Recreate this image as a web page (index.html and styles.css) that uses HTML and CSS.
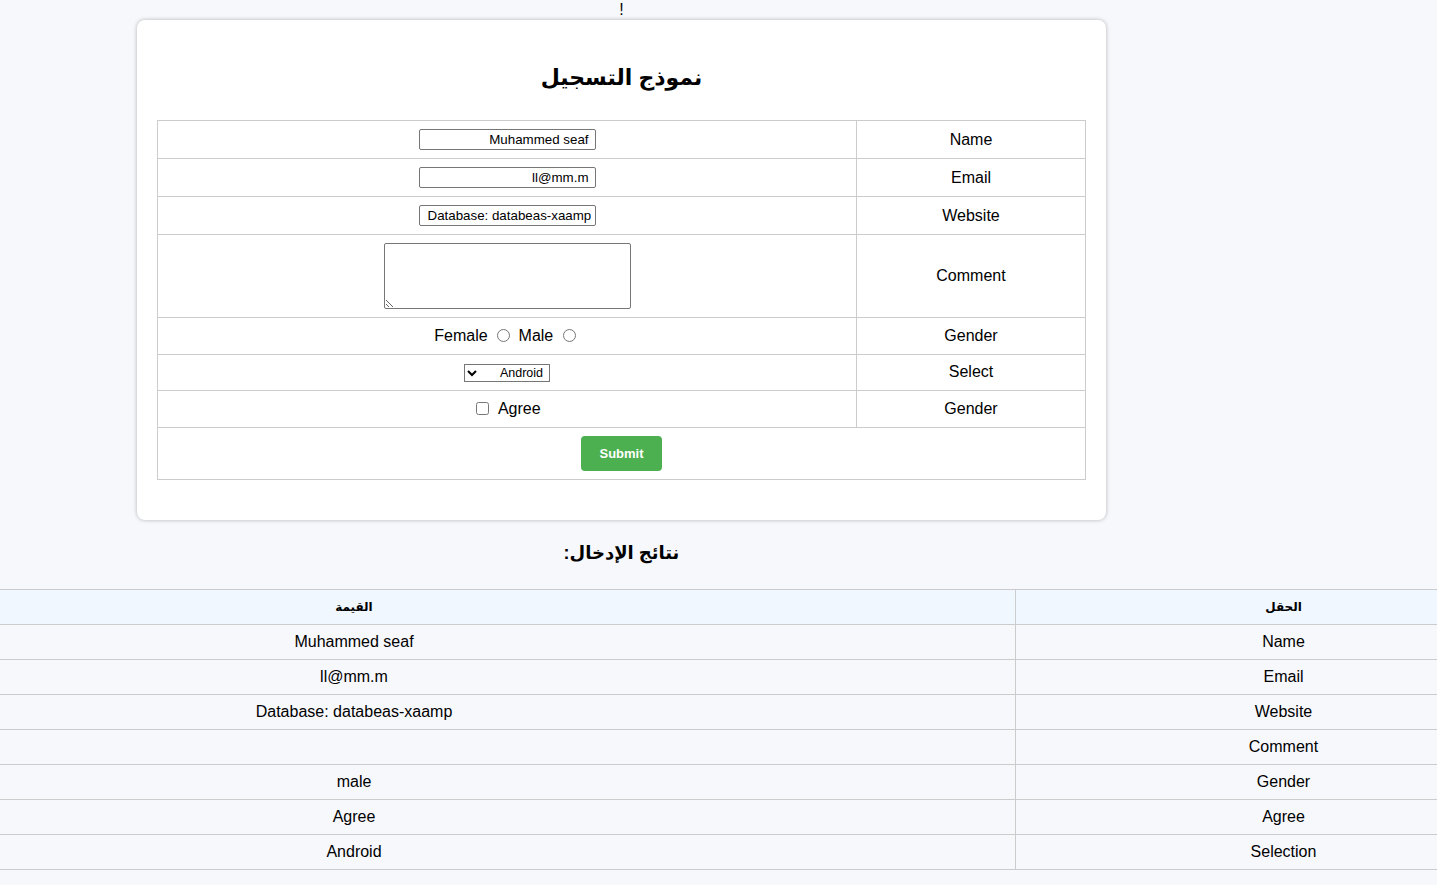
FILE: index.html
```html
<!DOCTYPE html>
<html lang="ar" dir="rtl">
<head>
<meta charset="utf-8">
<title>نموذج التسجيل</title>
<link rel="stylesheet" href="styles.css">
</head>
<body>
<div class="page">
  <div class="bang">!</div>
  <div class="card">
    <h2 class="title">نموذج التسجيل</h2>
    <form>
      <table class="form-table">
        <tr>
          <td class="label">Name</td>
          <td class="field"><input class="text-in" type="text" value="Muhammed seaf"></td>
        </tr>
        <tr>
          <td class="label">Email</td>
          <td class="field"><input class="text-in" type="text" value="ll@mm.m"></td>
        </tr>
        <tr>
          <td class="label">Website</td>
          <td class="field"><input class="text-in ltr-over" type="text" value="Database: databeas-xaamp"></td>
        </tr>
        <tr>
          <td class="label">Comment</td>
          <td class="field"><textarea class="comment"></textarea></td>
        </tr>
        <tr>
          <td class="label">Gender</td>
          <td class="field radio-row"><input class="radio" type="radio" name="g"> Female <input class="radio" type="radio" name="g"> Male</td>
        </tr>
        <tr>
          <td class="label">Select</td>
          <td class="field"><select class="sel"><option>Android</option><option>iOS</option></select></td>
        </tr>
        <tr>
          <td class="label">Gender</td>
          <td class="field check-row">Agree <input class="check" type="checkbox"></td>
        </tr>
        <tr>
          <td class="submit-cell" colspan="2"><button class="submit" type="button">Submit</button></td>
        </tr>
      </table>
    </form>
  </div>
  <h2 class="results-title">نتائج الإدخال:</h2>
</div>
<div class="results-wrap">
<table class="results">
  <tr class="head">
    <th class="col-field">الحقل</th>
    <th class="col-value">القيمة</th>
  </tr>
  <tr><td class="col-field">Name</td><td class="col-value">Muhammed seaf</td></tr>
  <tr><td class="col-field">Email</td><td class="col-value">ll@mm.m</td></tr>
  <tr><td class="col-field">Website</td><td class="col-value">Database: databeas-xaamp</td></tr>
  <tr><td class="col-field">Comment</td><td class="col-value"></td></tr>
  <tr><td class="col-field">Gender</td><td class="col-value">male</td></tr>
  <tr><td class="col-field">Agree</td><td class="col-value">Agree</td></tr>
  <tr><td class="col-field">Selection</td><td class="col-value">Android</td></tr>
</table>
</div>
</body>
</html>
```
FILE: styles.css
```css
html, body {
  margin: 0;
  padding: 0;
}
body {
  background: #f7f8fc;
  font-family: Arial, "Liberation Sans", "DejaVu Sans", sans-serif;
  color: #000;
  font-size: 16px;
  overflow-x: hidden;
}
.page {
  width: 1243px;
  margin-left: 0;
  margin-right: auto;
  text-align: center;
}
.bang {
  height: 20px;
  line-height: 20px;
  font-size: 16px;
}
.card {
  width: 969px;
  margin: 0 auto;
  box-sizing: border-box;
  background: #fff;
  border-radius: 8px;
  box-shadow: 0 0 4px rgba(0, 0, 0, 0.28);
  padding: 20px 20px 40px;
}
.title {
  font-size: 22px;
  font-weight: bold;
  margin: 0;
  line-height: 32px;
  height: 80px;
  box-sizing: border-box;
  padding-top: 22px;
}
.form-table {
  width: 100%;
  border-collapse: collapse;
  border: 1px solid #ccc;
}
.form-table td {
  border: 1px solid #ccc;
  padding: 8px;
  text-align: center;
  vertical-align: middle;
  font-size: 16px;
}
.form-table td.label {
  width: 212px;
}
.text-in {
  width: 177px;
  height: 21px;
  box-sizing: border-box;
  font-family: Arial, "Liberation Sans", sans-serif;
  font-size: 13.33px;
  border: 1px solid #767676;
  border-radius: 2px;
  padding: 1px 6px;
  display: block;
  margin: 0 auto;
}
.ltr-over {
  direction: ltr;
  padding: 1px 3px 1px 8px;
}
.comment {
  width: 247px;
  height: 66px;
  box-sizing: border-box;
  border: 1px solid #767676;
  border-radius: 2px;
  display: block;
  margin: 0 auto;
}
.radio-row, .check-row {
  line-height: 20px;
}
.radio {
  width: 13px;
  height: 13px;
  margin: 0 4px 0 5px;
  vertical-align: -1px;
}
.check {
  width: 13px;
  height: 13px;
  margin: 0 4px 0 3px;
  vertical-align: -1px;
}
.sel {
  width: 86px;
  height: 18px;
  font-family: Arial, "Liberation Sans", sans-serif;
  font-size: 12.5px;
  border: 1px solid #767676;
  border-radius: 0;
  background: #fff;
  padding: 0 2px;
  vertical-align: middle;
}
.submit-cell {
  padding: 8px;
}
.submit {
  background: #4caf50;
  color: #fff;
  border: none;
  border-radius: 4px;
  width: 81px;
  height: 35px;
  font-family: Arial, "Liberation Sans", sans-serif;
  font-size: 13px;
  font-weight: bold;
  cursor: pointer;
  vertical-align: middle;
}
.results-title {
  font-size: 18px;
  font-weight: bold;
  line-height: 24px;
  margin: 21px 0 24px;
}
.results-wrap {
  width: 1437px;
  overflow: hidden;
}
.results {
  width: 1858px;
  margin-right: -114px;
  margin-left: -307px;
  border-collapse: collapse;
  border-top: 1px solid #ccc;
}
.results th, .results td {
  padding: 8px;
  text-align: center;
  border-bottom: 1px solid #ccc;
  height: 18px;
  line-height: 18px;
}
.results th {
  background: #f0f7ff;
  font-size: 12px;
  font-weight: bold;
}
.results td {
  font-size: 16px;
}
.results .col-field {
  width: 519px;
  border-left: 1px solid #ccc;
}
```
